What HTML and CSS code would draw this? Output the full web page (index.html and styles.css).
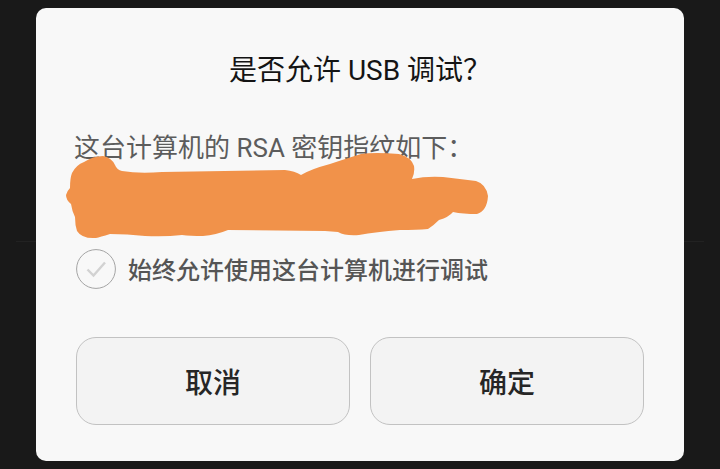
FILE: index.html
```html
<!DOCTYPE html>
<html lang="zh-CN">
<head>
<meta charset="utf-8">
<meta name="viewport" content="width=device-width, initial-scale=1">
<title>USB 调试</title>
<link rel="stylesheet" href="styles.css">
</head>
<body>
<main class="backdrop">
  <form class="dialog" role="dialog" aria-labelledby="title">
    <h1 class="title" id="title">是否允许 USB 调试？</h1>
    <div class="message">
      <p class="message-text">这台计算机的 RSA 密钥指纹如下：</p>
      <svg class="redaction" width="424" height="88" viewBox="66 152 424 88" aria-hidden="true">
        <path d="M66 195Q67 191 70 188Q70 178 72 173Q76 165 84 162Q93 156 103 156Q112 158 115 165Q117 170 122 171Q139 174 162 172L285 170Q295 171 301 175Q311 169 330 164Q348 158 361 154Q374 152 399 154Q411 157 414 166Q415 173 412 179Q426 176 443 177Q460 179 476 181Q486 184 488 196Q487 211 477 214Q463 214 453 212Q449 217 439 220Q433 226 428 229Q417 230 400 230Q376 232 359 235Q345 236 338 232L325 231L228 230Q216 235 203 236Q190 236 182 235Q165 237 145 236Q127 234 110 234Q100 237 96 238Q82 239 77 231Q75 225 75 217Q72 211 71 204Q66 200 66 195Z"/>
      </svg>
    </div>
    <label class="always">
      <input class="always-input" type="checkbox">
      <svg class="always-icon" width="40" height="40" viewBox="0 0 40 40" aria-hidden="true">
        <circle cx="20" cy="20" r="19.4"/>
        <path d="M11.5 20.5L17.5 26.5L29 13.5"/>
      </svg>
      <span class="always-text">始终允许使用这台计算机进行调试</span>
    </label>
    <div class="actions">
      <button class="button" type="button">取消</button>
      <button class="button" type="button">确定</button>
    </div>
  </form>
</main>
</body>
</html>
```
FILE: styles.css
```css
* {
  box-sizing: border-box;
}

body {
  margin: 0;
  background: #191919;
  font-family: Roboto, "Noto Sans CJK SC", sans-serif;
}

.backdrop {
  position: relative;
  padding: 8px 36px;
}

/* list divider of the screen behind the dialog */
.backdrop::before {
  content: "";
  position: absolute;
  top: 241px;
  left: 16px;
  right: 16px;
  height: 1px;
  background: #222;
}

.dialog {
  position: relative;
  padding: 40px 40px 36px;
  border-radius: 10px;
  background: #f8f8f8;
}

.title {
  margin: 0;
  color: #141414;
  font-size: 28px;
  font-weight: 400;
  line-height: 46px;
  text-align: center;
}

.message {
  position: relative;
  height: 108px;
  margin: 34px 0 11px -2px;
}

.message-text {
  margin: 0;
  color: #5c5c5c;
  font-size: 26px;
  line-height: 40px;
}

.redaction {
  position: absolute;
  top: 24px;
  left: -8px;
  fill: #f1924a;
}

.always {
  position: relative;
  display: flex;
  align-items: center;
  gap: 12px;
  color: #555;
  font-size: 24px;
  font-weight: 500;
  line-height: 40px;
}

.always-text {
  padding-top: 4px;
}

.always-input {
  position: absolute;
  width: 40px;
  height: 40px;
  margin: 0;
  opacity: 0;
}

.always-icon {
  flex: none;
  fill: none;
  stroke: #a4a4a4;
  stroke-width: 1;
}

.always-icon path {
  stroke: #d2d2d2;
  stroke-width: 2.4;
}

.always-input:checked + .always-icon path {
  stroke: #4c4c4c;
}

.actions {
  display: grid;
  grid-template-columns: 1fr 1fr;
  gap: 20px;
  margin-top: 46px;
}

.button {
  height: 88px;
  padding: 0;
  border: 1px solid #c2c2c2;
  border-radius: 20px;
  background: #f3f3f3;
  color: #262626;
  font-family: inherit;
  font-size: 28px;
  font-weight: 500;
}
```
